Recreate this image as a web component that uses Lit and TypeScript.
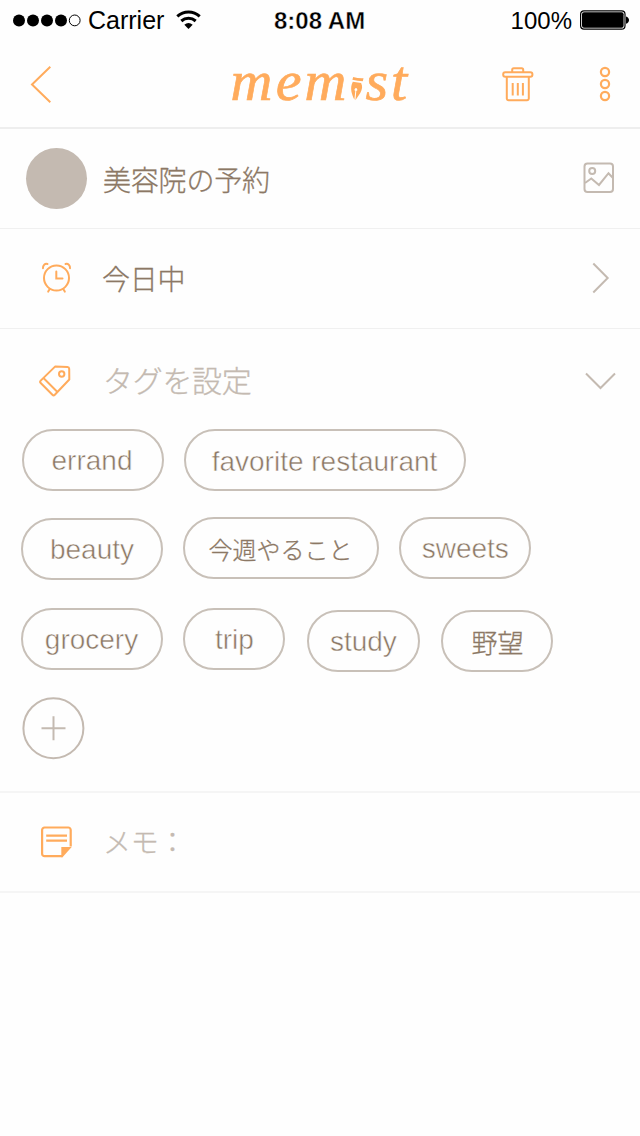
import { LitElement, html, css, svg } from "lit";
import { customElement } from "lit/decorators.js";

interface Tag {
  label: string;
  name: string;
  japanese?: boolean;
}

const TAG_ROWS: Tag[][] = [
  [
    { label: "errand", name: "errand" },
    { label: "favorite restaurant", name: "favorite" },
  ],
  [
    { label: "beauty", name: "beauty" },
    { label: "今週やること", name: "week", japanese: true },
    { label: "sweets", name: "sweets" },
  ],
  [
    { label: "grocery", name: "grocery" },
    { label: "trip", name: "trip" },
    { label: "study", name: "study" },
    { label: "野望", name: "ambition", japanese: true },
  ],
];

@customElement("app-root")
export class AppRoot extends LitElement {
  static styles = css`
    :host {
      display: flex;
      flex-direction: column;
      width: 640px;
      height: 1136px;
      overflow: hidden;
      background: #fefefe;
      color: #8c7865;
      font-family: "Liberation Sans", "Noto Sans CJK JP", sans-serif;
    }
    * { box-sizing: border-box; }
    svg { display: block; flex: none; overflow: visible; fill: none; }
    .status {
      display: grid;
      grid-template-columns: 274px 1fr auto;
      height: 40px;
      padding-right: 11px;
      color: #000;
      font-size: 24px;
      line-height: 41px;
      white-space: nowrap;
    }
    .status .left, .status .right { display: flex; align-items: center; height: 40px; }
    .left { padding-left: 13px; }
    .carrier { margin-left: 7px; font-size: 25px; }
    .wifi { margin-left: 12px; }
    .time { font-weight: bold; letter-spacing: 0; -webkit-text-stroke: 0.4px #fefefe; }
    .battery { margin-left: 8px; }
    .header {
      display: flex;
      height: 89px;
      border-bottom: 2px solid #eee;
      color: #ffab5c;
    }
    .back { margin: 26px 0 0 30px; }
    .logo { margin: 20px 0 0 178px; }
    .logo text {
      font-family: "Liberation Serif", serif;
      font-style: italic;
      font-size: 58px;
      fill: #ffab5c;
      stroke: #ffab5c;
      stroke-width: 0.7px;
    }
    .trash { margin: 26px 0 0 90.500px; }
    .more { margin: 26px 0 0 65.500px; }
    .row {
      display: flex;
      align-items: center;
      height: 100px;
      border-bottom: 1px solid #f0f0f0;
      padding-right: 25px;
    }
    .lead { display: flex; width: 103px; flex: none; }
    .end { margin-left: auto; }
    .picture { margin-right: 0.5px; }
    .clock { margin-left: 41px; }
    .tag { margin: 3px 0 0 38.5px; }
    .note { margin-left: 41px; }
    .down { margin-top: 3px; }
    .ja {
      font-family: "Noto Sans CJK JP", sans-serif;
      font-weight: 300;
      font-size: 28px;
      line-height: 40px;
      letter-spacing: -0.2px;
      white-space: nowrap;
      -webkit-text-stroke: 0.3px currentColor;
    }
    .date { margin: -1px 0 0 -1px; }
    .pale { color: #c4bab1; }
    .avatar {
      width: 61px;
      height: 61px;
      margin-left: 25.7px;
      border-radius: 50%;
      background: #c4bab1;
    }
    .tags { height: 464px; border-bottom: 2px solid #f5f5f5; }
    .tags-head { display: flex; align-items: center; height: 100px; padding-right: 24px; }
    .tags-head .ja { font-size: 30px; letter-spacing: -0.3px; }
    .chips { display: flex; align-items: flex-start; height: 89.3px; }
    .chip {
      flex: none;
      height: 62px;
      border: 2px solid #c8c0b8;
      border-radius: 31px;
      font-size: 28px;
      line-height: 59px;
      text-align: center;
      white-space: nowrap;
      -webkit-text-stroke: 0.5px #fefefe;
    }
    .chip.jp {
      font-family: "Noto Sans CJK JP", sans-serif;
      font-weight: 300;
      font-size: 24px;
      -webkit-text-stroke: 0.3px currentColor;
    }
    .errand { width: 142px; margin-left: 21.5px; padding-right: 1px; }
    .favorite { width: 282px; margin-left: 20px; line-height: 62px; }
    .beauty { width: 142px; margin-left: 21px; }
    .week { width: 196px; margin-left: 19.500px; margin-top: -1px; }
    .sweets { width: 132px; margin-left: 20.800px; margin-top: -1.500px; }
    .grocery { width: 142px; margin-left: 20.500px; }
    .trip { width: 102px; margin-left: 20.900px; }
    .study { width: 113px; margin-left: 21.500px; margin-top: 2px; }
    .chip.ambition { width: 112px; margin-left: 21.500px; margin-top: 2px; font-size: 26px; }
    .add { margin: 0.5px 0 0 22px; }
    .memo { height: 100px; border-bottom: 2px solid #f5f5f5; }
    .memo .ja { margin-top: -3px; }
  `;

  private statusBar() {
    return html`
      <div class="status">
        <div class="left">
          <svg width="68" height="14" viewBox="0 0 68 14">
            ${[6, 20, 34, 48].map((x) => svg`<circle cx=${x} cy="7.4" r="6" fill="#000"/>`)}
            <circle cx="61.700" cy="7.4" r="5.4" stroke="#000" stroke-width="1"/>
          </svg>
          <span class="carrier">Carrier</span>
          <svg class="wifi" width="25" height="20" viewBox="0 0 25 20" stroke="#000" stroke-width="3">
            <path d="M1.300 6.400a16.500 16.500 0 0 1 22.400 0"/>
            <path d="M5.300 11a11 11 0 0 1 14.400 0"/>
            <path d="M12.500 19L8.300 14.700a6.500 6.500 0 0 1 8.400 0z" fill="#000" stroke="none"/>
          </svg>
        </div>
        <div class="time">8:08 AM</div>
        <div class="right">
          <span>100%</span>
          <svg class="battery" width="49" height="20" viewBox="0 0 49 20">
            <rect x=".6" y=".8" width="44.400" height="18.400" rx="3.400" stroke="#000" stroke-width="1.200"/>
            <rect x="2" y="2.200" width="41.600" height="15.600" rx="2" fill="#000"/>
            <path d="M46 6.500c4 1 4 6.200 0 7.200z" fill="#000"/>
          </svg>
        </div>
      </div>`;
  }

  private header() {
    return html`
      <div class="header">
        <svg class="back" width="22" height="38" viewBox="0 0 22 38" stroke="currentColor" stroke-width="2">
          <path d="M20.300.700L2 18.500L20.300 36.300"/>
        </svg>
        <svg class="logo" width="181" height="46" viewBox="0 0 181 46">
          <text x="0.500" y="39.500" textLength="116">mem</text>
          <text x="135.500" y="39.500" textLength="41.500">st</text>
          <g fill="currentColor">
            <path d="M123.200 16.900q5 1.600 10.300 1.300l-.7 3q-5.400-.2-10.400-1.500z"/>
            <path d="M122.800 21.800l8.300 1.300c1.700 3.200 1.200 6.300-.8 9.900l-4.900 7.200.9-9.200a1.400 1.400 0 1 0-1-.1l-.9 8.900c-2.600-5.600-4.900-11.400-1.600-18z"/>
          </g>
        </svg>
        <svg class="trash" width="32" height="36" viewBox="0 0 32 36" stroke="currentColor" stroke-width="2">
          <path d="M10.200 6V3.700a1.500 1.500 0 0 1 1.500-1.500h8a1.500 1.500 0 0 1 1.500 1.500V6"/>
          <rect x="1.200" y="6.200" width="29.200" height="4.600" rx="2"/>
          <path d="M4.800 11V32.500a1.800 1.800 0 0 0 1.800 1.800h18.400a1.800 1.800 0 0 0 1.800-1.800V11"/>
          <path d="M10.700 17V29.500M15.800 17V29.500M20.900 17V29.500"/>
        </svg>
        <svg class="more" width="13" height="36" viewBox="0 0 13 36" stroke="currentColor" stroke-width="2.200">
          ${[6, 18, 30].map((y) => svg`<circle cx="6" cy=${y} r="4.100"/>`)}
        </svg>
      </div>`;
  }

  render() {
    return html`
      ${this.statusBar()}
      ${this.header()}
      <div class="row">
        <div class="lead"><div class="avatar"></div></div>
        <span class="ja">美容院の予約</span>
        <svg class="end picture" width="32" height="33" viewBox="0 0 32 33" stroke="#c4bab1" stroke-width="2">
          <rect x="1.500" y="1.500" width="28.500" height="28.500" rx="3"/>
          <circle cx="9.200" cy="9" r="3"/>
          <path d="M2 21L8.300 16.400L16 23L25.500 11.200L30 16"/>
        </svg>
      </div>
      <div class="row">
        <div class="lead">
          <svg class="clock" width="32" height="33" viewBox="0 0 32 33" stroke="#ffab5c" stroke-width="2" stroke-linecap="round">
            <circle cx="15.500" cy="16" r="12.500"/>
            <path d="M15.300 9.500V16.500H21.500M2 6.200C1.700 3 4 1.300 6.500 2M29 6.200C29.300 3 27 1.300 24.500 2M8.800 27L7.200 29.600M22.200 27L23.800 29.600"/>
          </svg>
        </div>
        <span class="ja date">今日中</span>
        <svg class="end" width="24" height="33" viewBox="0 0 24 33" stroke="#c4bab1" stroke-width="2">
          <path d="M2.300 1.500L16.700 16L2.300 30.500"/>
        </svg>
      </div>
      <div class="tags">
        <div class="tags-head">
          <div class="lead">
            <svg class="tag" width="32" height="32" viewBox="0 0 32 32" stroke="#ffab5c" stroke-width="2" stroke-linejoin="round">
              <path d="M16.300 1.400L28.500 2.100a1.800 1.800 0 0 1 1.700 1.700L30.300 14.500L15.800 29.800a1.700 1.700 0 0 1-2.400 0L1.700 18a1.700 1.700 0 0 1 0-2.400z"/>
              <path d="M4.700 13.200L18.200 26.800"/>
              <circle cx="22.700" cy="9" r="2.700"/>
            </svg>
          </div>
          <span class="ja pale">タグを設定</span>
          <svg class="end down" width="31" height="18" viewBox="0 0 31 18" stroke="#c4bab1" stroke-width="2">
            <path d="M1 1.500L15.500 16L30 1.500"/>
          </svg>
        </div>
        ${TAG_ROWS.map(
          (row) => html`<div class="chips">
            ${row.map((t) => html`<div class="chip ${t.name} ${t.japanese ? "jp" : ""}">${t.label}</div>`)}
          </div>`
        )}
        <svg class="add" width="63" height="63" viewBox="0 0 63 63" stroke="#c4bab1" stroke-width="2">
          <circle cx="31.400" cy="31.200" r="30"/>
          <path d="M19.500 31.200H43.500M31.500 19.200V43.200"/>
        </svg>
      </div>
      <div class="row memo">
        <div class="lead">
          <svg class="note" width="32" height="32" viewBox="0 0 32 32" stroke="#ffab5c" stroke-width="2.200">
            <path d="M29.700 20.500V4a2.500 2.500 0 0 0-2.500-2.500H3.600A2.500 2.500 0 0 0 1.100 4V27.700a2.500 2.500 0 0 0 2.500 2.500H21.500"/>
            <path d="M5.200 9.700H26M5.200 14.700H26"/>
            <path d="M20.300 21H30.700L21.500 31.200H20.300z" fill="#ffab5c" stroke="none"/>
          </svg>
        </div>
        <span class="ja pale">メモ：</span>
      </div>
    `;
  }
}
